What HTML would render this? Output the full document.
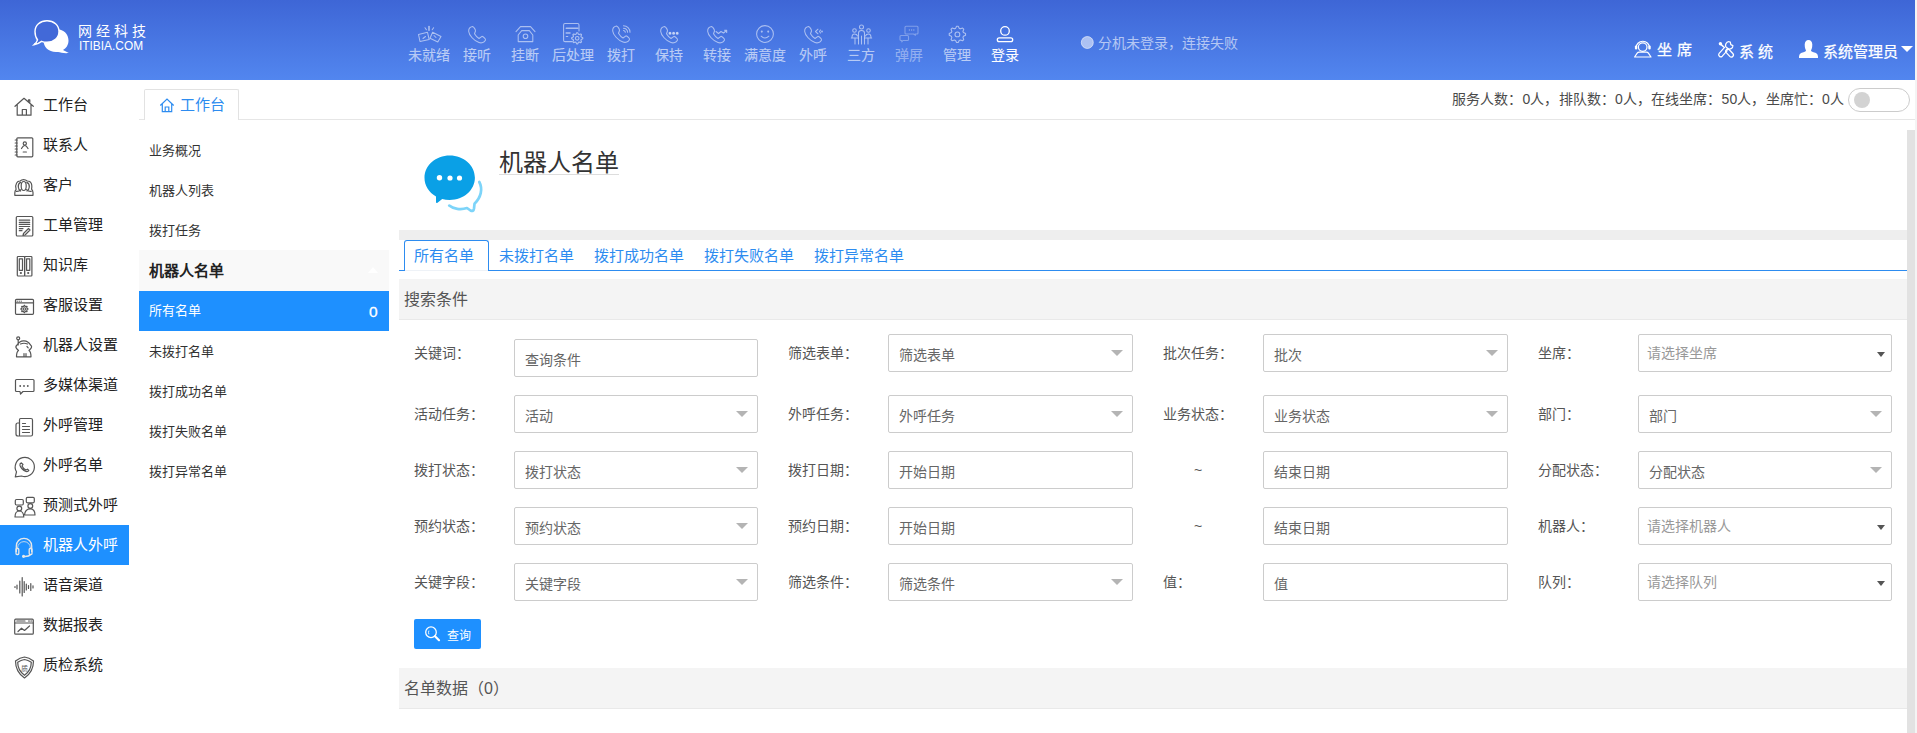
<!DOCTYPE html>
<html lang="zh-CN"><head><meta charset="utf-8"><style>
*{margin:0;padding:0;box-sizing:border-box}
html,body{width:1917px;height:733px;overflow:hidden;background:#fff;font-family:"Liberation Sans",sans-serif;color:#333}
.a{position:absolute;white-space:nowrap;line-height:1}
#hdr{position:absolute;left:0;top:0;width:1915px;height:80px;background:linear-gradient(#3e66d6,#5286ef)}
#rstrip{position:absolute;left:1915px;top:0;width:2px;height:733px;background:#f4f4f4}
.tbt{position:absolute;top:47px;width:48px;text-align:center;color:rgba(255,255,255,.6);font-size:14px;line-height:16px;white-space:nowrap;-webkit-text-stroke:0.2px rgba(255,255,255,.35)}
.nav{position:absolute;left:0;width:129px;height:40px}
.navt{position:absolute;left:43px;font-size:15px;color:#222;line-height:18px;white-space:nowrap}
.sbt{position:absolute;left:149px;font-size:13px;color:#333;line-height:16px;white-space:nowrap}
.lbl{position:absolute;font-size:14px;color:#555;line-height:16px;white-space:nowrap}
.inp{position:absolute;height:38px;border:1px solid #ccc;border-radius:2px;background:#fff}
.ph{position:absolute;font-size:14px;color:#666;line-height:16px;white-space:nowrap}
.ph2{position:absolute;font-size:14px;color:#999;line-height:16px;white-space:nowrap}
.arr{position:absolute;width:0;height:0;border-left:6px solid transparent;border-right:6px solid transparent;border-top:6px solid #b4b4b4}
.arr2{position:absolute;width:0;height:0;border-left:4px solid transparent;border-right:4px solid transparent;border-top:5px solid #555}
</style></head><body>
<div id="hdr"></div><div id="rstrip"></div>
<div class="a" style="left:78px;top:23px;font-size:14px;color:#fff;letter-spacing:4px;line-height:16px">网经科技</div>
<div class="a" style="left:79px;top:40px;font-size:13.5px;color:#fff;line-height:12px;transform:scaleX(.88);transform-origin:0 0">ITIBIA.COM</div>
<div class="tbt" style="left:405px;">未就绪</div>
<div class="tbt" style="left:453px;">接听</div>
<div class="tbt" style="left:501px;">挂断</div>
<div class="tbt" style="left:549px;">后处理</div>
<div class="tbt" style="left:597px;">拨打</div>
<div class="tbt" style="left:645px;">保持</div>
<div class="tbt" style="left:693px;">转接</div>
<div class="tbt" style="left:741px;">满意度</div>
<div class="tbt" style="left:789px;">外呼</div>
<div class="tbt" style="left:837px;">三方</div>
<div class="tbt" style="left:885px;color:rgba(255,255,255,.36);">弹屏</div>
<div class="tbt" style="left:933px;">管理</div>
<div class="tbt" style="left:981px;color:#fff;">登录</div>
<div class="a" style="left:1098px;top:35px;font-size:14px;color:rgba(255,255,255,.6);line-height:16px">分机未登录，连接失败</div>
<div class="a" style="left:1657px;top:41px;font-size:15px;color:#fff;letter-spacing:5px;line-height:17px;-webkit-text-stroke:0.25px #fff">坐席</div>
<div class="a" style="left:1739px;top:43px;font-size:15px;color:#fff;letter-spacing:4px;line-height:17px;-webkit-text-stroke:0.25px #fff">系统</div>
<div class="a" style="left:1823px;top:43px;font-size:15px;color:#fff;line-height:17px;-webkit-text-stroke:0.25px #fff">系统管理员</div>
<div class="navt" style="top:96px">工作台</div>
<div class="navt" style="top:136px">联系人</div>
<div class="navt" style="top:176px">客户</div>
<div class="navt" style="top:216px">工单管理</div>
<div class="navt" style="top:256px">知识库</div>
<div class="navt" style="top:296px">客服设置</div>
<div class="navt" style="top:336px">机器人设置</div>
<div class="navt" style="top:376px">多媒体渠道</div>
<div class="navt" style="top:416px">外呼管理</div>
<div class="navt" style="top:456px">外呼名单</div>
<div class="navt" style="top:496px">预测式外呼</div>
<div class="nav" style="top:525px;background:#1e90ff"></div>
<div class="navt" style="top:536px;color:#fff">机器人外呼</div>
<div class="navt" style="top:576px">语音渠道</div>
<div class="navt" style="top:616px">数据报表</div>
<div class="navt" style="top:656px">质检系统</div>
<div class="a" style="left:139px;top:119px;width:1776px;height:1px;background:#e6e6e6"></div>
<div class="a" style="left:144px;top:89px;width:95px;height:31px;border:1px solid #e2e2e2;border-bottom:none;background:#fff;border-radius:2px 2px 0 0"></div>
<div class="a" style="left:180px;top:96px;font-size:15px;color:#2d8cf0;line-height:17px">工作台</div>
<div class="sbt" style="top:143px">业务概况</div>
<div class="sbt" style="top:183px">机器人列表</div>
<div class="sbt" style="top:223px">拨打任务</div>
<div class="a" style="left:139px;top:250px;width:250px;height:41px;background:#f9f9f9"></div>
<div class="a" style="left:149px;top:262px;font-size:15px;font-weight:bold;color:#222;line-height:17px">机器人名单</div>
<div class="a" style="left:139px;top:291px;width:250px;height:40px;background:#1e90ff"></div>
<div class="a" style="left:149px;top:303px;font-size:13px;color:#fff;line-height:16px">所有名单</div>
<div class="a" style="left:369px;top:304px;font-size:15.5px;color:#fff;line-height:16px;-webkit-text-stroke:0.3px #fff">0</div>
<div class="a" style="left:368px;top:267px;width:0;height:0;border-left:5px solid transparent;border-right:5px solid transparent;border-bottom:6px solid #fff"></div>
<div class="sbt" style="top:344px">未拨打名单</div>
<div class="sbt" style="top:384px">拨打成功名单</div>
<div class="sbt" style="top:424px">拨打失败名单</div>
<div class="sbt" style="top:464px">拨打异常名单</div>
<div class="a" style="left:1452px;top:91px;font-size:14px;color:#4a4a4a;line-height:16px;letter-spacing:0.1px">服务人数：0人，排队数：0人，在线坐席：50人，坐席忙：0人</div>
<div class="a" style="left:1848px;top:88px;width:62px;height:24px;border:1px solid #ccc;border-radius:12px;background:#fff"></div>
<div class="a" style="left:1854px;top:92px;width:16px;height:16px;border-radius:8px;background:#d3d3d3"></div>
<div class="a" style="left:499px;top:149px;font-size:24px;color:#333;line-height:28px">机器人名单</div>
<div class="a" style="left:499px;top:174px;width:120px;height:1px;background:#ddd"></div>
<div class="a" style="left:399px;top:230px;width:1508px;height:10px;background:#eee"></div>
<div class="a" style="left:399px;top:270px;width:1508px;height:1px;background:#2d8cf0"></div>
<div class="a" style="left:404px;top:240px;width:85px;height:31px;border:1px solid #2d8cf0;border-bottom:none;border-radius:3px 3px 0 0;background:#fff"></div>
<div class="a" style="left:405px;top:270px;width:83px;height:1px;background:#eef2f7"></div>
<div class="a" style="left:414px;top:247px;font-size:15px;color:#2d8cf0;line-height:17px">所有名单</div>
<div class="a" style="left:499px;top:247px;font-size:15px;color:#2d8cf0;line-height:17px">未拨打名单</div>
<div class="a" style="left:594px;top:247px;font-size:15px;color:#2d8cf0;line-height:17px">拨打成功名单</div>
<div class="a" style="left:704px;top:247px;font-size:15px;color:#2d8cf0;line-height:17px">拨打失败名单</div>
<div class="a" style="left:814px;top:247px;font-size:15px;color:#2d8cf0;line-height:17px">拨打异常名单</div>
<div class="a" style="left:399px;top:279px;width:1508px;height:41px;background:#f4f4f4;border-bottom:1px solid #e9e9e9"></div>
<div class="a" style="left:404px;top:291px;font-size:16px;color:#555;line-height:18px">搜索条件</div>
<div class="lbl" style="left:414px;top:345px">关键词：</div>
<div class="inp" style="left:514px;top:339px;width:244px"></div>
<div class="ph" style="left:525px;top:352px">查询条件</div>
<div class="lbl" style="left:788px;top:345px">筛选表单：</div>
<div class="inp" style="left:888px;top:334px;width:245px"></div>
<div class="ph" style="left:899px;top:347px">筛选表单</div>
<div class="arr" style="left:1111px;top:350px"></div>
<div class="lbl" style="left:1163px;top:345px">批次任务：</div>
<div class="inp" style="left:1263px;top:334px;width:245px"></div>
<div class="ph" style="left:1274px;top:347px">批次</div>
<div class="arr" style="left:1486px;top:350px"></div>
<div class="lbl" style="left:1538px;top:345px">坐席：</div>
<div class="inp" style="left:1638px;top:334px;width:254px"></div>
<div class="ph2" style="left:1647px;top:345px">请选择坐席</div>
<div class="arr2" style="left:1877px;top:352px"></div>
<div class="lbl" style="left:414px;top:406px">活动任务：</div>
<div class="inp" style="left:514px;top:395px;width:244px"></div>
<div class="ph" style="left:525px;top:408px">活动</div>
<div class="arr" style="left:736px;top:411px"></div>
<div class="lbl" style="left:788px;top:406px">外呼任务：</div>
<div class="inp" style="left:888px;top:395px;width:245px"></div>
<div class="ph" style="left:899px;top:408px">外呼任务</div>
<div class="arr" style="left:1111px;top:411px"></div>
<div class="lbl" style="left:1163px;top:406px">业务状态：</div>
<div class="inp" style="left:1263px;top:395px;width:245px"></div>
<div class="ph" style="left:1274px;top:408px">业务状态</div>
<div class="arr" style="left:1486px;top:411px"></div>
<div class="lbl" style="left:1538px;top:406px">部门：</div>
<div class="inp" style="left:1638px;top:395px;width:254px"></div>
<div class="ph" style="left:1649px;top:408px">部门</div>
<div class="arr" style="left:1870px;top:411px"></div>
<div class="lbl" style="left:414px;top:462px">拨打状态：</div>
<div class="inp" style="left:514px;top:451px;width:244px"></div>
<div class="ph" style="left:525px;top:464px">拨打状态</div>
<div class="arr" style="left:736px;top:467px"></div>
<div class="lbl" style="left:788px;top:462px">拨打日期：</div>
<div class="inp" style="left:888px;top:451px;width:245px"></div>
<div class="ph" style="left:899px;top:464px">开始日期</div>
<div class="lbl" style="left:1194px;top:462px">~</div>
<div class="inp" style="left:1263px;top:451px;width:245px"></div>
<div class="ph" style="left:1274px;top:464px">结束日期</div>
<div class="lbl" style="left:1538px;top:462px">分配状态：</div>
<div class="inp" style="left:1638px;top:451px;width:254px"></div>
<div class="ph" style="left:1649px;top:464px">分配状态</div>
<div class="arr" style="left:1870px;top:467px"></div>
<div class="lbl" style="left:414px;top:518px">预约状态：</div>
<div class="inp" style="left:514px;top:507px;width:244px"></div>
<div class="ph" style="left:525px;top:520px">预约状态</div>
<div class="arr" style="left:736px;top:523px"></div>
<div class="lbl" style="left:788px;top:518px">预约日期：</div>
<div class="inp" style="left:888px;top:507px;width:245px"></div>
<div class="ph" style="left:899px;top:520px">开始日期</div>
<div class="lbl" style="left:1194px;top:518px">~</div>
<div class="inp" style="left:1263px;top:507px;width:245px"></div>
<div class="ph" style="left:1274px;top:520px">结束日期</div>
<div class="lbl" style="left:1538px;top:518px">机器人：</div>
<div class="inp" style="left:1638px;top:507px;width:254px"></div>
<div class="ph2" style="left:1647px;top:518px">请选择机器人</div>
<div class="arr2" style="left:1877px;top:525px"></div>
<div class="lbl" style="left:414px;top:574px">关键字段：</div>
<div class="inp" style="left:514px;top:563px;width:244px"></div>
<div class="ph" style="left:525px;top:576px">关键字段</div>
<div class="arr" style="left:736px;top:579px"></div>
<div class="lbl" style="left:788px;top:574px">筛选条件：</div>
<div class="inp" style="left:888px;top:563px;width:245px"></div>
<div class="ph" style="left:899px;top:576px">筛选条件</div>
<div class="arr" style="left:1111px;top:579px"></div>
<div class="lbl" style="left:1163px;top:574px">值：</div>
<div class="inp" style="left:1263px;top:563px;width:245px"></div>
<div class="ph" style="left:1274px;top:576px">值</div>
<div class="lbl" style="left:1538px;top:574px">队列：</div>
<div class="inp" style="left:1638px;top:563px;width:254px"></div>
<div class="ph2" style="left:1647px;top:574px">请选择队列</div>
<div class="arr2" style="left:1877px;top:581px"></div>
<div class="a" style="left:414px;top:619px;width:67px;height:30px;background:#1e90ff;border-radius:2px"></div>
<div class="a" style="left:447px;top:629px;font-size:12px;color:#fff;line-height:14px">查询</div>
<div class="a" style="left:399px;top:668px;width:1508px;height:41px;background:#f4f4f4;border-bottom:1px solid #e9e9e9"></div>
<div class="a" style="left:404px;top:680px;font-size:16px;color:#555;line-height:18px">名单数据（0）</div>
<div class="a" style="left:1907px;top:130px;width:8px;height:603px;background:#e2e2e2"></div>
<svg style="position:absolute;left:0;top:0" width="1917" height="733" viewBox="0 0 1917 733"><g fill="none" stroke="rgba(255,255,255,0.55)" stroke-width="1.05" stroke-linejoin="round" stroke-linecap="round"><path d="M418.5,34.5 L427.5,32.3 L429.2,39.6 L420,41.5 Z"/><path d="M432.6,32.3 L441,36.5 L437.8,42 L430,38.3 Z"/><path d="M429,26.5 V30.3" stroke-width="1.6"/><path d="M425,27.8 L426.4,29.8"/><path d="M433.6,27.8 L432.2,29.8"/><path d="M423,38.5 L425.5,36.5 M434,35.5 L436,37.5"/><path transform="translate(468,26)" d="M4.5,0.5 C2,1 0.5,3 0.7,5.5 C1,9 6,15 11,16.5 C13.5,17.5 16.5,16.5 17.5,14 C17.8,13 16,11 14,10.3 L11,12.5 C9,11.5 7.5,9.5 6.5,7.8 L7.5,5 C7.5,3.5 6,1 4.5,0.5 Z"/><path d="M516,31.7 L520.5,26.6 L530.5,26.6 L535,31.7"/><path d="M518.2,41.6 L518.2,35 L521.7,30.6 L529.3,30.6 L532.8,35 L532.8,41.6 Z"/><circle cx="525.5" cy="36.2" r="2.3"/><path d="M572,41.6 L565,41.6 Q563.6,41.6 563.6,40.2 L563.6,24.9 Q563.6,23.5 565,23.5 L577.6,23.5 Q579,23.5 579,24.9 L579,31"/><path d="M566.2,28.3 H577.8" stroke-width="1.4"/><path d="M566.2,33 H570" stroke-width="1.5"/><path d="M566.2,36.5 H567.8"/><path d="M582.77,37.75 L582.77,38.85 L581.22,39.52 L580.90,40.28 L581.53,41.85 L580.75,42.63 L579.18,42.00 L578.42,42.32 L577.75,43.87 L576.65,43.87 L575.98,42.32 L575.22,42.00 L573.65,42.63 L572.87,41.85 L573.50,40.28 L573.18,39.52 L571.63,38.85 L571.63,37.75 L573.18,37.08 L573.50,36.32 L572.87,34.75 L573.65,33.97 L575.22,34.60 L575.98,34.28 L576.65,32.73 L577.75,32.73 L578.42,34.28 L579.18,34.60 L580.75,33.97 L581.53,34.75 L580.90,36.32 L581.22,37.08 Z" fill="none" stroke="rgba(255,255,255,0.55)" stroke-width="1.1" stroke-linejoin="round"/><circle cx="577.2" cy="38.3" r="1.8" fill="none" stroke="rgba(255,255,255,0.55)" stroke-width="1.1"/><path transform="translate(612,25.5)" d="M4.5,0.5 C2,1 0.5,3 0.7,5.5 C1,9 6,15 11,16.5 C13.5,17.5 16.5,16.5 17.5,14 C17.8,13 16,11 14,10.3 L11,12.5 C9,11.5 7.5,9.5 6.5,7.8 L7.5,5 C7.5,3.5 6,1 4.5,0.5 Z"/><path d="M623.5,25.8 A6.5,6.5 0 0 1 630,32.3"/><path d="M623.5,28.2 A4.1,4.1 0 0 1 627.6,32.3"/><path d="M623.5,30.5 A1.8,1.8 0 0 1 625.3,32.3"/><path transform="translate(660,26)" d="M4.5,0.5 C2,1 0.5,3 0.7,5.5 C1,9 6,15 11,16.5 C13.5,17.5 16.5,16.5 17.5,14 C17.8,13 16,11 14,10.3 L11,12.5 C9,11.5 7.5,9.5 6.5,7.8 L7.5,5 C7.5,3.5 6,1 4.5,0.5 Z"/><circle cx="670" cy="33.2" r="1" fill="rgba(255,255,255,0.55)"/><circle cx="673.6" cy="33.2" r="1" fill="rgba(255,255,255,0.55)"/><circle cx="677.2" cy="33.2" r="1" fill="rgba(255,255,255,0.55)"/><path transform="translate(707,26)" d="M4.5,0.5 C2,1 0.5,3 0.7,5.5 C1,9 6,15 11,16.5 C13.5,17.5 16.5,16.5 17.5,14 C17.8,13 16,11 14,10.3 L11,12.5 C9,11.5 7.5,9.5 6.5,7.8 L7.5,5 C7.5,3.5 6,1 4.5,0.5 Z"/><path d="M716,31.5 L718.5,33.5 L721,31.5 L723.5,33 L726.5,30.5 M724.5,30.3 H726.7 V32.5"/><circle cx="765" cy="34" r="8.4"/><circle cx="761.8" cy="31.6" r="0.5"/><circle cx="768.2" cy="31.6" r="0.5"/><path d="M761.2,36.2 Q765,39.8 768.8,36.2"/><path transform="translate(804,26)" d="M4.5,0.5 C2,1 0.5,3 0.7,5.5 C1,9 6,15 11,16.5 C13.5,17.5 16.5,16.5 17.5,14 C17.8,13 16,11 14,10.3 L11,12.5 C9,11.5 7.5,9.5 6.5,7.8 L7.5,5 C7.5,3.5 6,1 4.5,0.5 Z"/><path d="M818,29.2 L815.5,31.5 L818,33.8 M820.5,30 L819.5,31.5 L820.5,33"/><circle cx="822" cy="31.5" r="0.4"/><circle cx="861.5" cy="27" r="2"/><circle cx="854.5" cy="30.5" r="1.8"/><circle cx="868.5" cy="30.5" r="1.8"/><path d="M858.5,44 V33 Q858.5,30.5 861.5,30.5 Q864.5,30.5 864.5,33 V44 M861.5,36 V44"/><path d="M852,37.5 Q852,34 854.5,34 Q857,34 857.5,36 M855,44 V38 M851.3,38 H858"/><path d="M871,37.5 Q871,34 868.5,34 Q866,34 865.5,36 M868,44 V38 M865,38 H871.7"/></g><g fill="none" stroke="rgba(255,255,255,0.32)" stroke-width="1.1" stroke-linejoin="round"><path d="M906,26.3 H917 Q918,26.3 918,27.3 V33 Q918,34 917,34 H915 L915.5,35.3 L913.5,34 H906 Q905,34 905,33 V27.3 Q905,26.3 906,26.3 Z"/><path d="M901,35.5 H907.5 Q908.5,35.5 908.5,36.5 V39.5 Q908.5,40.5 907.5,40.5 H903 L901.8,41.8 L901.8,40.5 H901 Q900,40.5 900,39.5 V36.5 Q900,35.5 901,35.5 Z"/><path d="M908.8,30 H910 M911,30 H912.2 M913.2,30 H914.4" stroke-width="1.3"/></g><path d="M965.56,33.60 L965.56,35.20 L963.43,36.23 L962.96,37.37 L963.74,39.60 L962.60,40.74 L960.37,39.96 L959.23,40.43 L958.20,42.56 L956.60,42.56 L955.57,40.43 L954.43,39.96 L952.20,40.74 L951.06,39.60 L951.84,37.37 L951.37,36.23 L949.24,35.20 L949.24,33.60 L951.37,32.57 L951.84,31.43 L951.06,29.20 L952.20,28.06 L954.43,28.84 L955.57,28.37 L956.60,26.24 L958.20,26.24 L959.23,28.37 L960.37,28.84 L962.60,28.06 L963.74,29.20 L962.96,31.43 L963.43,32.57 Z" fill="none" stroke="rgba(255,255,255,0.55)" stroke-width="1.1" stroke-linejoin="round"/><circle cx="957.4" cy="34.4" r="2.4" fill="none" stroke="rgba(255,255,255,0.55)" stroke-width="1.1"/><g fill="none" stroke="#fff" stroke-width="1.3"><circle cx="1005" cy="30.9" r="4.3"/><rect x="997.3" y="37.9" width="15.4" height="3.8" rx="1.9"/></g><circle cx="1087.3" cy="42.5" r="6" fill="rgba(255,255,255,0.55)" stroke="rgba(255,255,255,0.7)" stroke-width="0.8"/><g fill="none" stroke="#fff" stroke-width="1.2" stroke-linecap="round" stroke-linejoin="round"><circle cx="1642.7" cy="47.1" r="4.3"/><path d="M1636,48 A6.8,6.8 0 0 1 1649.6,48"/><path d="M1634.6,57 L1637.2,53.2 Q1637.9,52.2 1639.2,52.2 H1646.4 Q1647.7,52.2 1648.4,53.2 L1651,57 Z"/></g><rect x="1634.9" y="45.5" width="2.4" height="4" rx="1.1" fill="#fff"/><rect x="1648.3" y="45.5" width="2.4" height="4" rx="1.1" fill="#fff"/><g fill="none" stroke="#fff" stroke-width="1.25" stroke-linecap="round" stroke-linejoin="round"><path d="M1721.2,44.6 L1724.4,47.5" stroke-width="1.5"/><path d="M1726.27,52.64 L1729.77,56.34 A2.1,2.1 0 0 0 1732.83,53.46 L1729.33,49.76 A2.1,2.1 0 0 0 1726.27,52.64 Z"/><path d="M1723.64,48.4 L1719.14,53.4 A2.1,2.1 0 0 0 1722.26,56.2 L1726.76,51.2"/><path d="M1726.76,51.2 L1727.6,48.2 A3.2,3.2 0 0 1 1730.3,42.1 L1730.8,44.6 L1732.9,45.6 A3.2,3.2 0 0 1 1727.6,48.2"/></g><circle cx="1720.4" cy="43.7" r="1.7" fill="#fff"/><path fill="#fff" d="M1808.5,40 Q1812,40 1812.3,44.5 Q1812.3,47 1811.8,48.5 Q1811,50 1811,51 Q1812,52 1816,53 Q1818,54 1818,56.5 V58 H1799 V56.5 Q1799,54 1801,53 Q1805,52 1806,51 Q1806,50 1805.2,48.5 Q1804.7,47 1804.7,44.5 Q1805,40 1808.5,40 Z"/><path fill="#fff" d="M1901,46 H1913 L1907,52 Z"/><path fill="#fff" d="M56,29 C63.5,29 68.5,34 68.5,40.5 C68.5,45 66,48.5 63,50 L68.8,53 C64,53.5 60.5,52.5 58,52 C57.3,52 56.7,52 56,52 C48.5,52 43.5,47 43.5,40.5 C43.5,34 48.5,29 56,29 Z"/><path fill="#4269d8" stroke="#fff" stroke-width="1.4" d="M47,20.7 C53.8,20.7 59,25.3 59,31.5 C59,37.7 53.8,42.3 47,42.3 C45,42.3 43.2,42 41.5,41.4 C39.5,43 37,44.5 34,44.8 C35.8,43.3 37,41.8 37.5,39.8 C35.8,37.8 35,34.8 35,31.5 C35,25.3 40.2,20.7 47,20.7 Z"/><g fill="none" stroke="#555" stroke-width="1.2" stroke-linejoin="round" stroke-linecap="round"><path d="M15,106.3 L24,98.3 L33.3,106.3 M17.2,104.5 V115.2 H31 V104.5 M22.3,115.2 V109.5 H26.4 V115.2 M28.5,101 V99.8 H29.8 V102.2"/><rect x="16.8" y="137.8" width="16" height="19" rx="1"/><path d="M15.2,140 h2 M15.2,143 h2 M15.2,146 h2 M15.2,149 h2 M15.2,152 h2 M15.2,155 h2"/><circle cx="24.8" cy="143.5" r="1.6"/><path d="M21.5,148.5 Q24.8,142.5 28,148.5"/><path d="M23.2,152 h3.2"/><path d="M14.8,195.3 H33 V192.5 Q32.8,190.3 31.6,189.2 Q32.4,184.2 30.6,182.3 Q29.2,181 27.2,181 Q25.6,179.6 23.6,179.6 Q21.6,179.6 20.1,181 Q17.6,181 16.6,183 Q15,185.6 16.1,189.4 Q14.8,190.8 14.8,193 Z"/><ellipse cx="23.7" cy="186" rx="2.5" ry="4.5"/><path d="M20.6,182.4 Q17.9,183.5 18.3,187 Q18.6,190 20.6,191 M26.8,182.4 Q29.6,183.5 29.3,187 Q29,190 27,191"/><path d="M16.3,191.3 Q19,191.6 21,189.6 M31.2,191.3 Q28.5,191.6 26.5,189.6"/><rect x="16.3" y="216.5" width="16.5" height="19.5" rx="1"/><path d="M19.3,220.2 H29.7 M19.3,222.3 H29.7 M19.3,224.4 H29.7 M19.3,226.5 H29.7 M19.3,228.6 H23 M19.3,230.7 H22"/><path d="M23.5,233.5 L28.5,228.5 L30,230 L25,235 L23,235.5 Z"/><rect x="17.3" y="256.5" width="7.3" height="19.5" rx="0.8"/><rect x="24.6" y="256.5" width="7.3" height="19.5" rx="0.8"/><rect x="19.3" y="258.8" width="3.2" height="11.5"/><rect x="26.6" y="258.8" width="3.2" height="11.5"/><circle cx="20.9" cy="273" r="0.5"/><circle cx="28.2" cy="273" r="0.5"/><rect x="15.5" y="299.3" width="18" height="15" rx="1"/><path d="M15.5,302.8 H33.5"/></g><path d="M27.98,308.65 L27.98,309.35 L26.89,309.75 L26.69,310.23 L27.18,311.28 L26.68,311.78 L25.63,311.29 L25.15,311.49 L24.75,312.58 L24.05,312.58 L23.65,311.49 L23.17,311.29 L22.12,311.78 L21.62,311.28 L22.11,310.23 L21.91,309.75 L20.82,309.35 L20.82,308.65 L21.91,308.25 L22.11,307.77 L21.62,306.72 L22.12,306.22 L23.17,306.71 L23.65,306.51 L24.05,305.42 L24.75,305.42 L25.15,306.51 L25.63,306.71 L26.68,306.22 L27.18,306.72 L26.69,307.77 L26.89,308.25 Z" fill="none" stroke="#555" stroke-width="1.1" stroke-linejoin="round"/><circle cx="24.4" cy="309" r="1.2" fill="none" stroke="#555" stroke-width="1.1"/><g fill="none" stroke="#555" stroke-width="1.2" stroke-linejoin="round" stroke-linecap="round"><path d="M17,301.2 h0.6 M19,301.2 h0.6 M21,301.2 h0.6" stroke-width="0.9"/><circle cx="18.2" cy="338.3" r="1.5"/><path d="M18.2,339.8 L18.2,345 M17,345 Q15,346.5 16.5,348.5 L18.5,350.5 Q16.5,352 16.5,356.8 H31 Q31,352 29,350.5 L30.8,348.5 Q32.5,346.5 30.5,345 Q28,340.5 23.5,340.8 Q19.5,341 17,345 M20.5,344 Q24,342.5 27.5,344 M27,346.5 L28.2,347.8 M24,356.5 V353.5 M26,356.5 V353.5"/><path d="M16.5,379.5 H33 Q34,379.5 34,380.5 V390.5 Q34,391.5 33,391.5 H23 L20.5,394 L20,391.5 H16.5 Q15.5,391.5 15.5,390.5 V380.5 Q15.5,379.5 16.5,379.5 Z"/></g><g fill="#555"><circle cx="20.2" cy="386" r="0.9"/><circle cx="24" cy="386" r="0.9"/><circle cx="27.8" cy="386" r="0.9"/></g><g fill="none" stroke="#555" stroke-width="1.2" stroke-linejoin="round" stroke-linecap="round"><path d="M20.5,418.5 H31 Q32.5,418.5 32.5,420 V434.5 Q32.5,436 31,436 H18 Q16,436 16,434 V425 Q16,423 17.8,423 H19.5 V435 M20.5,418.5 Q19.5,418.5 19.5,420 V423"/><path d="M22.5,423.5 h3 M22.5,426.5 h7 M22.5,429.5 h7 M22.5,432.5 h7"/><path d="M16.49,471.8 A9.6,9.6 0 1 1 21.5,476 L15.3,476.8 Z"/><path d="M21.3,462.8 Q19.5,463.5 20,465.5 Q21.5,469.5 26,471.5 Q28,472 28.8,470.5 L27.5,469.2 L26,470 Q23,468.5 22,466 L23,464.5 Z"/><rect x="15.3" y="499.5" width="8" height="5.5" rx="1.2"/><rect x="26.3" y="497.3" width="8" height="5.5" rx="1.2"/><circle cx="19.3" cy="508.5" r="2.4"/><circle cx="30.3" cy="506" r="2.4"/><path d="M15,517 Q15,511 19.3,511 Q23.5,511 23.8,517 Z M24.5,515 Q25,508.8 30.3,508.8 Q35,508.8 35,515 Z"/><path d="M15,586.5 V587.5 M17,585 V589 M19.8,581 V593 M22.2,577.5 V596 M24.2,581.5 V592.5 M26.3,584 V590 M28.5,585.5 V588.5 M30.8,583.5 V590.5 M33,585.8 V588"/><rect x="14.7" y="619.2" width="18.6" height="15" rx="1"/><path d="M14.7,623 H33.3 M16.8,621 H25 M28.5,621 h1 M30.8,621 h1"/><path d="M18,631.5 L21.5,628.2 L24.5,630.5 L29.5,626"/><path d="M24.5,657 Q29,657.5 33.5,661 Q33.5,672 24.5,678 Q15.5,672 15.5,661 Q20,657.5 24.5,657 Z"/><path d="M24.5,659.5 Q28,660 31.3,662.3 Q31.3,670.5 24.5,675.3 Q17.7,670.5 17.7,662.3 Q21,660 24.5,659.5 Z"/></g><text x="24.5" y="670.5" font-size="7" fill="#555" text-anchor="middle" font-family="Liberation Sans">质</text><g fill="none" stroke="#e8e8e8" stroke-width="1.3"><path d="M16.3,552 V546 A7.7,7.7 0 0 1 31.7,546 V552"/><path d="M17.6,548 A6.4,6.4 0 0 1 30.4,548" stroke-width="0.8"/><rect x="16" y="548.5" width="2.8" height="6" rx="1"/><rect x="29.2" y="548.5" width="2.8" height="6" rx="1"/><path d="M30.5,554.5 Q29,556.5 25,556.5"/></g><circle cx="23.6" cy="556.3" r="1.6" fill="#e8e8e8"/><g fill="none" stroke="#2d8cf0" stroke-width="1.2"><path d="M160.3,105.5 L167,99 L173.7,105.5 M162.3,103.5 V111.6 H171.7 V103.5 M165.2,111.6 V107 H168.8 V111.6"/></g><path fill="#0aa0e6" d="M449.7,155.6 C463.6,155.6 474.9,165.5 474.9,177.8 C474.9,190.1 463.6,200 449.7,200 C447,200 444.5,199.6 442.2,198.9 L437.5,202.8 Q436,203.5 436,202 L436,196.5 C428.9,192.5 424.5,185.6 424.5,177.8 C424.5,165.5 435.8,155.6 449.7,155.6 Z"/><g fill="#fff"><circle cx="439.5" cy="177.7" r="2.7"/><circle cx="450" cy="178" r="2.6"/><circle cx="459.5" cy="178" r="2.6"/></g><path fill="none" stroke="#7dd4f9" stroke-width="2.7" stroke-linecap="round" stroke-linejoin="round" d="M479.3,182 C483,189 481,197.5 474.5,203.8 L474,208.5 Q473.5,212 470.5,210.5 L467,208 C461,210 453,209 449.2,205.6"/><g fill="none" stroke="#fff" stroke-width="1.25"><circle cx="431" cy="632.2" r="5.3"/><path d="M435,636.3 L439,640.2" stroke-width="2.2" stroke-linecap="round"/><path d="M428.9,630.6 Q428.1,632.4 428.9,634.3" stroke-width="0.9"/></g></svg>
</body></html>
